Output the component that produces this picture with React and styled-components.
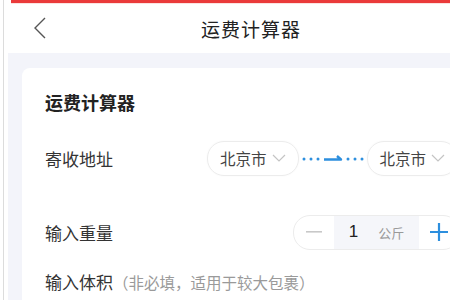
import React from 'react';
import styled, { createGlobalStyle } from 'styled-components';

const GlobalStyle = createGlobalStyle`
  html, body {
    margin: 0;
    padding: 0;
    background: #fff;
    overflow: hidden;
  }
  body {
    font-family: "Noto Sans CJK SC", "Noto Sans", sans-serif;
    color: #333;
  }
`;

const Frame = styled.div`
  width: 450px;
  height: 300px;
  display: flex;
  padding-left: 3px;
  box-sizing: border-box;
  overflow: hidden;
`;

const EdgeLine = styled.div`
  width: 1px;
  background: #dcdcdc;
  flex-shrink: 0;
`;

const Screen = styled.div`
  flex: 1;
  display: flex;
  flex-direction: column;
  padding-left: 4px;
  min-width: 0;
`;

const StatusStrip = styled.div`
  height: 3px;
  margin-left: 3px;
  background: #ea3a3a;
  border-bottom: 1px solid #fbe3e0;
`;

const Header = styled.div`
  height: 49px;
  display: flex;
  align-items: center;
  justify-content: center;
  position: relative;
  background: #fff;
`;

const BackButton = styled.div`
  position: absolute;
  left: 25px;
  top: 13px;
  display: flex;
`;

const HeaderTitle = styled.div`
  font-size: 19px;
  color: #222;
  margin-left: 44px;
  letter-spacing: 1px;
`;

const Body = styled.div`
  flex: 1;
  background: #f3f4fa;
  padding: 15px 0 0 14px;
`;

const Card = styled.div`
  background: #fff;
  border-radius: 8px 0 0 0;
  height: 100%;
  padding: 17px 0 0 23px;
  box-sizing: border-box;
  display: flex;
  flex-direction: column;
`;

const CardTitle = styled.div`
  font-size: 18px;
  font-weight: 600;
  color: #222;
  height: 34px;
  line-height: 34px;
`;

const Row = styled.div`
  display: flex;
  align-items: center;
  height: ${(p) => p.h}px;
  margin-top: ${(p) => p.mt || 0}px;
`;

const Label = styled.div`
  font-size: 17px;
  color: #333;
  width: 162px;
  flex-shrink: 0;
  white-space: nowrap;
`;

const Hint = styled.span`
  font-size: 15.5px;
  color: #9a9a9a;
`;

const Pill = styled.div`
  height: 33px;
  border: 1px solid #ececec;
  border-radius: 17px;
  display: flex;
  align-items: center;
  padding: 0 11px 0 12px;
  gap: 4px;
  font-size: 15.5px;
  color: #444;
  flex-shrink: 0;
  box-shadow: 0 0 2px rgba(0, 0, 0, 0.04);
`;

const Connector = styled.div`
  width: 68px;
  display: flex;
  justify-content: center;
  flex-shrink: 0;
`;

const Stepper = styled.div`
  margin-left: 86px;
  height: 33px;
  border: 1px solid #ececec;
  border-radius: 17px;
  display: flex;
  align-items: stretch;
  overflow: hidden;
  flex-shrink: 0;
`;

const StepButton = styled.div`
  width: 40px;
  display: flex;
  align-items: center;
  justify-content: center;
`;

const StepValue = styled.div`
  width: 85px;
  background: #f5f6fa;
  display: flex;
  align-items: center;
  justify-content: center;
  gap: 20px;
`;

const Num = styled.span`
  font-size: 17px;
  color: #222;
  font-family: "Liberation Sans", Arial, sans-serif;
`;

const Unit = styled.span`
  font-size: 13px;
  color: #999;
`;

const Chevron = () => (
  <svg width="16" height="10" viewBox="0 0 16 10">
    <path d="M2 2 L8 8 L14 2" fill="none" stroke="#c4c4c4" strokeWidth="1.2" />
  </svg>
);

const Arrow = () => (
  <svg width="62" height="10" viewBox="0 0 62 10">
    {[2, 9, 16, 46, 53, 60].map((x) => (
      <circle key={x} cx={x} cy="6" r="1.5" fill="#2d8fde" />
    ))}
    <path d="M22 6.5 L39 6.5 L35 3" fill="none" stroke="#2d8fde" strokeWidth="2.4" strokeLinejoin="round" />
  </svg>
);

export default function App() {
  return (
    <>
      <GlobalStyle />
      <Frame>
        <EdgeLine />
        <Screen>
          <StatusStrip />
          <Header>
            <BackButton>
              <svg width="14" height="22" viewBox="0 0 14 22">
                <path d="M12 1 L2 11 L12 21" fill="none" stroke="#555" strokeWidth="1.4" />
              </svg>
            </BackButton>
            <HeaderTitle>运费计算器</HeaderTitle>
          </Header>
          <Body>
            <Card>
              <CardTitle>运费计算器</CardTitle>
              <Row h={42} mt={18}>
                <Label>寄收地址</Label>
                <Pill>
                  北京市
                  <Chevron />
                </Pill>
                <Connector>
                  <Arrow />
                </Connector>
                <Pill>
                  北京市
                  <Chevron />
                </Pill>
              </Row>
              <Row h={36} mt={35}>
                <Label>输入重量</Label>
                <Stepper>
                  <StepButton>
                    <svg width="16" height="2" viewBox="0 0 16 2">
                      <rect width="16" height="1.6" fill="#c8c8c8" />
                    </svg>
                  </StepButton>
                  <StepValue>
                    <Num>1</Num>
                    <Unit>公斤</Unit>
                  </StepValue>
                  <StepButton>
                    <svg width="18" height="18" viewBox="0 0 18 18">
                      <path d="M9 0 V18 M0 9 H18" stroke="#2d8fde" strokeWidth="2.2" />
                    </svg>
                  </StepButton>
                </Stepper>
              </Row>
              <Row h={30} mt={16}>
                <Label>
                  输入体积<Hint>（非必填，适用于较大包裹）</Hint>
                </Label>
              </Row>
            </Card>
          </Body>
        </Screen>
      </Frame>
    </>
  );
}
